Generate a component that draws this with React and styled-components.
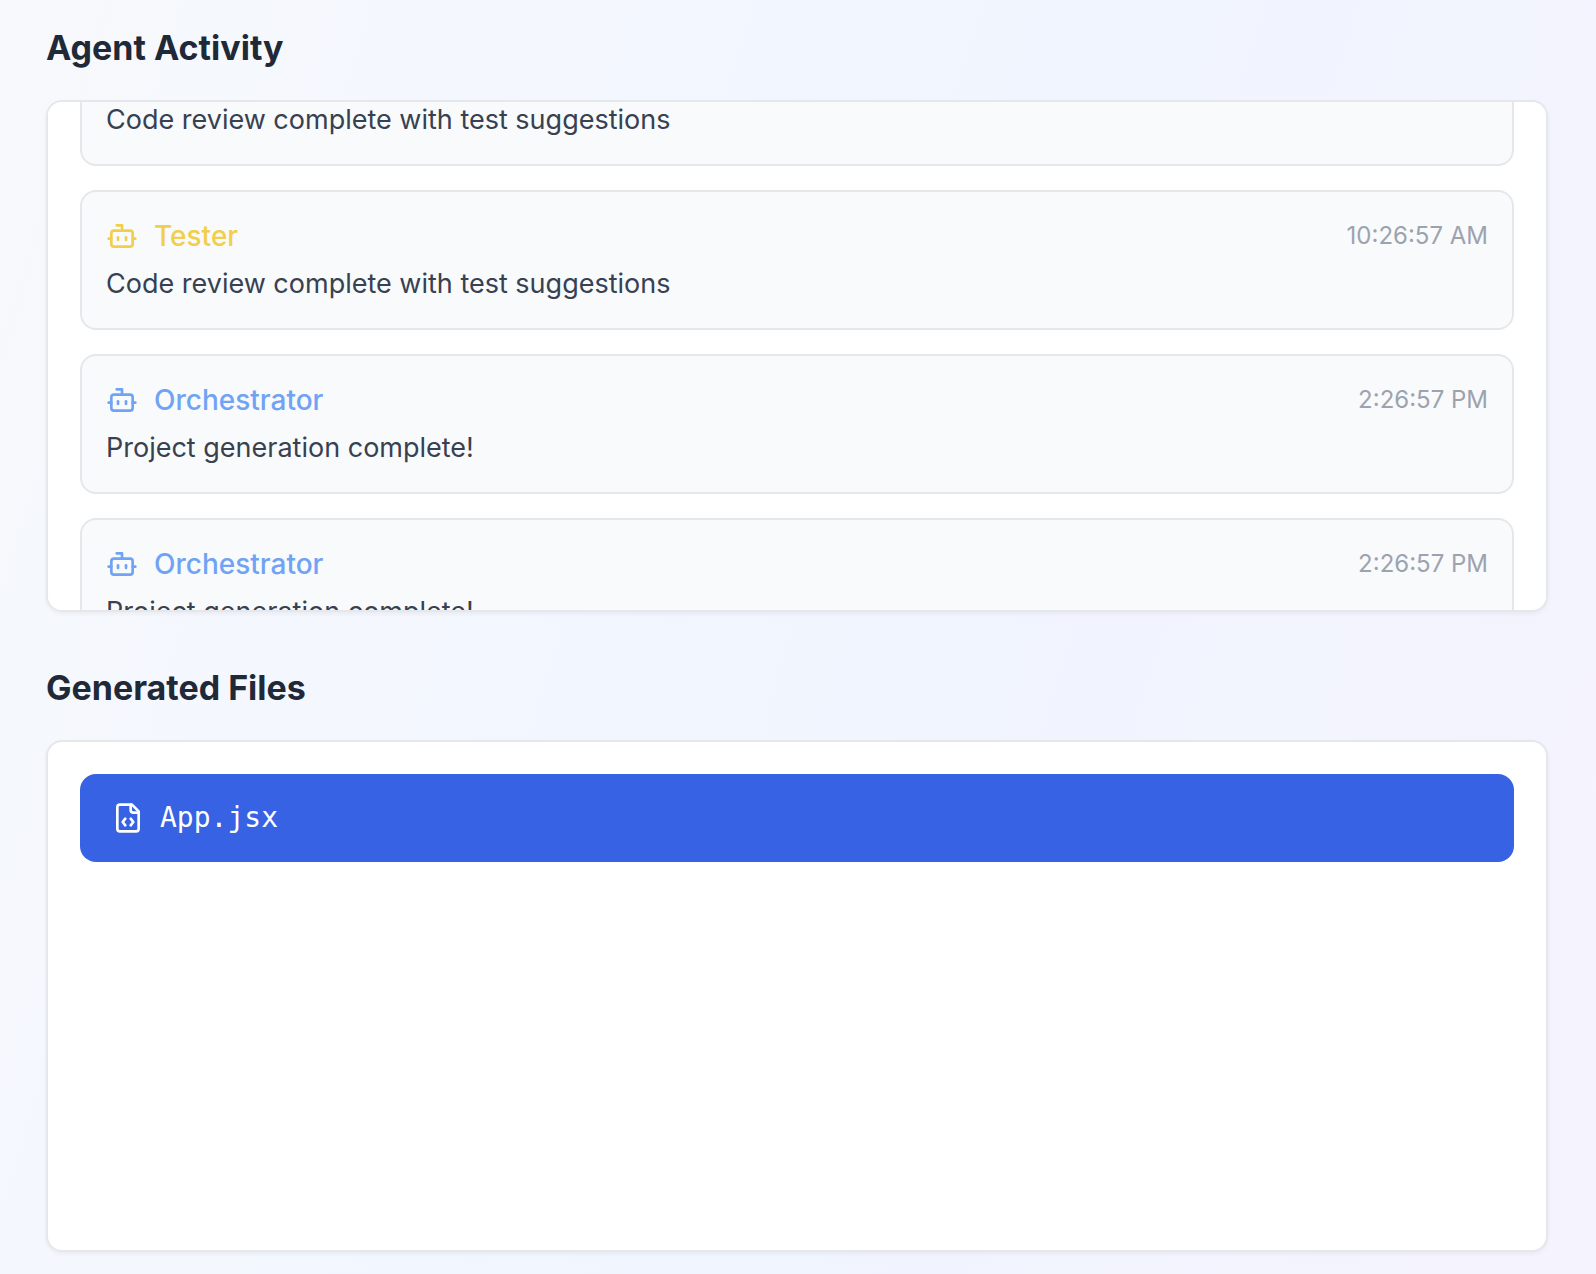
import React, { useLayoutEffect, useRef, useState } from "react";
import styled, { createGlobalStyle } from "styled-components";
import { Bot } from "lucide-react";

const GlobalStyle = createGlobalStyle`
  *, *::before, *::after { box-sizing: border-box; }
  body {
    margin: 0;
    font-family: Inter, "Liberation Sans", sans-serif;
    color: #1f2937;
  }
  h2, p, ul { margin: 0; padding: 0; }
  ul { list-style: none; }
`;

const Page = styled.main`
  display: flex;
  flex-direction: column;
  gap: 48px;
  min-height: 100vh;
  padding: 20px 48px 22px 46px;
  background: linear-gradient(107deg, #f7f9fc 0%, #f0f5ff 54%, #f5f3fe 100%);
`;

const Section = styled.section`
  display: flex;
  flex-direction: column;
  gap: 24px;
`;

const Heading = styled.h2`
  font-size: 34px;
  line-height: 56px;
  font-weight: 700;
`;

const Panel = styled.div`
  height: 512px;
  padding: 32px;
  overflow-y: auto;
  scrollbar-width: none;
  background: #ffffff;
  border: 2px solid #e5e7eb;
  border-radius: 16px;
  box-shadow: 0 2px 4px rgba(0, 0, 0, 0.05);
`;

const List = styled.ul`
  display: flex;
  flex-direction: column;
  gap: 24px;
`;

const Entry = styled.li`
  display: flex;
  flex-direction: column;
  gap: 8px;
  padding: 24px;
  background: #f9fafb;
  border: 2px solid #e5e7eb;
  border-radius: 16px;
`;

const EntryHeader = styled.div`
  display: flex;
  align-items: center;
  justify-content: space-between;
`;

const Agent = styled.span`
  display: flex;
  align-items: center;
  gap: 16px;
  font-size: 28px;
  line-height: 40px;
  font-weight: 500;
  color: ${({ $color }) => $color};
`;

const Time = styled.time`
  font-size: 24px;
  line-height: 32px;
  color: #9ca3af;
`;

const Message = styled.p`
  font-size: 27px;
  line-height: 40px;
  color: #374151;
`;

const FileButton = styled.button`
  display: flex;
  align-items: center;
  gap: 16px;
  width: 100%;
  padding: 24px 32px;
  border: 0;
  border-radius: 16px;
  background: ${({ $active }) => ($active ? "#3762e3" : "transparent")};
  color: ${({ $active }) => ($active ? "#ffffff" : "#374151")};
  font-family: "DejaVu Sans Mono", "Liberation Mono", monospace;
  font-size: 28px;
  line-height: 40px;
  text-align: left;
  cursor: pointer;
`;

function FileCodeIcon() {
  return (
    <svg
      width="32"
      height="32"
      viewBox="0 0 24 24"
      fill="none"
      stroke="currentColor"
      strokeWidth="2"
      strokeLinecap="round"
      strokeLinejoin="round"
      aria-hidden="true"
    >
      <path d="M10 12.5 8 15l2 2.5" />
      <path d="m14 12.5 2 2.5-2 2.5" />
      <path d="M14 2v4a2 2 0 0 0 2 2h4" />
      <path d="M15 2H6a2 2 0 0 0-2 2v16a2 2 0 0 0 2 2h12a2 2 0 0 0 2-2V7z" />
    </svg>
  );
}

const agentColors = {
  Tester: "#f2cf4b",
  Orchestrator: "#71a3f5",
};

// An entry without an agent is a plain message with no header row.
const activity = [
  { message: "Code review complete with test suggestions" },
  { agent: "Tester", time: "10:26:57 AM", message: "Code review complete with test suggestions" },
  { agent: "Orchestrator", time: "2:26:57 PM", message: "Project generation complete!" },
  { agent: "Orchestrator", time: "2:26:57 PM", message: "Project generation complete!" },
];

const files = ["App.jsx"];

const INITIAL_SCROLL = 60;

export default function App() {
  const log = useRef(null);
  const [selected, setSelected] = useState("App.jsx");

  useLayoutEffect(() => {
    log.current.scrollTop = INITIAL_SCROLL;
  }, []);

  return (
    <>
      <GlobalStyle />
      <Page>
        <Section aria-labelledby="activity-heading">
          <Heading id="activity-heading">Agent Activity</Heading>
          <Panel ref={log}>
            <List>
              {activity.map((item, i) => (
                <Entry key={i}>
                  {item.agent && (
                    <EntryHeader>
                      <Agent $color={agentColors[item.agent]}>
                        <Bot size={32} aria-hidden="true" />
                        {item.agent}
                      </Agent>
                      <Time>{item.time}</Time>
                    </EntryHeader>
                  )}
                  <Message>{item.message}</Message>
                </Entry>
              ))}
            </List>
          </Panel>
        </Section>
        <Section aria-labelledby="files-heading">
          <Heading id="files-heading">Generated Files</Heading>
          <Panel>
            <List>
              {files.map((name) => (
                <li key={name}>
                  <FileButton
                    type="button"
                    $active={selected === name}
                    onClick={() => setSelected(name)}
                  >
                    <FileCodeIcon />
                    {name}
                  </FileButton>
                </li>
              ))}
            </List>
          </Panel>
        </Section>
      </Page>
    </>
  );
}
